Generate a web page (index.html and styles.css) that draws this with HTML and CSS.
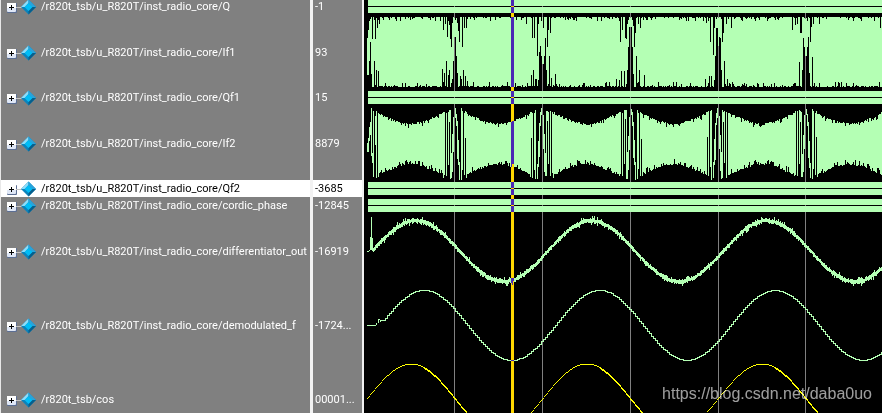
FILE: index.html
```html
<!DOCTYPE html>
<html lang="en">
<head>
<meta charset="utf-8">
<title>Wave</title>
<link rel="stylesheet" href="styles.css">
</head>
<body>
<svg class="defs" aria-hidden="true">
  <symbol id="plus" viewBox="0 0 10 10">
    <rect width="10" height="10" rx="1" fill="#5c6f94"/>
    <rect width="9" height="9" rx="1" fill="#dfe7f6"/>
    <path d="M0 0h9v5H0z" fill="#fff"/>
    <path d="M2 4h5v1H2zM4 2h1v5H4z" fill="#000"/>
  </symbol>
  <symbol id="gem" viewBox="0 0 20 16">
    <path d="M0 8h6v1H0z" fill="#c4c4c4"/>
    <path d="M12.500 0.500L20 8l-7.500 7.500L5 8z" fill="#0a84bd"/>
    <path d="M12.500 0.500L5 8h4l3.500-4z" fill="#8fdcf8"/>
    <path d="M12.500 0.500L20 8h-4l-3.500-4z" fill="#2aa3da"/>
    <path d="M20 8l-7.500 7.500V12L16 8z" fill="#075f8c"/>
    <path d="M12.500 4L16.500 8l-4 4-4-4z" fill="#00bdf6"/>
  </symbol>
</svg>
<main class="wave-window">
  <table class="signals">
    <tbody>
      <tr class="bus"><td class="name"><div class="signal"><button type="button" aria-label="Expand Q"><svg><use href="#plus"/></svg></button><svg class="gem"><use href="#gem"/></svg><span>/r820t_tsb/u_R820T/inst_radio_core/Q</span></div></td><td class="value">-1</td></tr>
      <tr class="analog"><td class="name"><div class="signal"><button type="button" aria-label="Expand If1"><svg><use href="#plus"/></svg></button><svg class="gem"><use href="#gem"/></svg><span>/r820t_tsb/u_R820T/inst_radio_core/If1</span></div></td><td class="value">93</td></tr>
      <tr class="bus"><td class="name"><div class="signal"><button type="button" aria-label="Expand Qf1"><svg><use href="#plus"/></svg></button><svg class="gem"><use href="#gem"/></svg><span>/r820t_tsb/u_R820T/inst_radio_core/Qf1</span></div></td><td class="value">15</td></tr>
      <tr class="analog"><td class="name"><div class="signal"><button type="button" aria-label="Expand If2"><svg><use href="#plus"/></svg></button><svg class="gem"><use href="#gem"/></svg><span>/r820t_tsb/u_R820T/inst_radio_core/If2</span></div></td><td class="value">8879</td></tr>
      <tr class="bus selected"><td class="name"><div class="signal"><button type="button" aria-label="Expand Qf2"><svg><use href="#plus"/></svg></button><svg class="gem"><use href="#gem"/></svg><span>/r820t_tsb/u_R820T/inst_radio_core/Qf2</span></div></td><td class="value">-3685</td></tr>
      <tr class="bus"><td class="name"><div class="signal"><button type="button" aria-label="Expand cordic_phase"><svg><use href="#plus"/></svg></button><svg class="gem"><use href="#gem"/></svg><span>/r820t_tsb/u_R820T/inst_radio_core/cordic_phase</span></div></td><td class="value">-12845</td></tr>
      <tr class="analog"><td class="name"><div class="signal"><button type="button" aria-label="Expand differentiator_out"><svg><use href="#plus"/></svg></button><svg class="gem"><use href="#gem"/></svg><span>/r820t_tsb/u_R820T/inst_radio_core/differentiator_out</span></div></td><td class="value">-16919</td></tr>
      <tr class="analog"><td class="name"><div class="signal"><button type="button" aria-label="Expand demodulated_f"><svg><use href="#plus"/></svg></button><svg class="gem"><use href="#gem"/></svg><span>/r820t_tsb/u_R820T/inst_radio_core/demodulated_f</span></div></td><td class="value">-1724...</td></tr>
      <tr class="analog"><td class="name"><div class="signal"><button type="button" aria-label="Expand cos"><svg><use href="#plus"/></svg></button><svg class="gem"><use href="#gem"/></svg><span>/r820t_tsb/cos</span></div></td><td class="value">00001...</td></tr>
    </tbody>
  </table>
  <section class="waves" aria-label="Waveforms">
    <svg class="plot" shape-rendering="crispEdges" role="img" aria-label="Signal traces">
      <g transform="translate(-364 0)">
        <path id="grid" class="grid"/>
        <path id="green" class="trace"/>
        <path id="cos" class="trace-cos"/>
        <rect class="cursor" x="511" y="0" width="3" height="100%"/>
      </g>
    </svg>
    <p class="watermark">https://blog.csdn.net/daba0uo</p>
  </section>
</main>
<script src="waves.js"></script>
</body>
</html>
```
FILE: styles.css
```css
* { box-sizing: border-box; }

body {
  margin: 0;
  background: #000;
  font: 11px/16px Roboto, "Noto Sans", sans-serif;
  color: #fff;
}

.defs { display: none; }

.wave-window {
  display: flex;
  height: 100vh;
  overflow: hidden;
}

.signals {
  flex: none;
  align-self: flex-start;
  table-layout: fixed;
  width: 364px;
  margin-top: -2px;
  border-collapse: separate;
  border-spacing: 0;
  border-left: 1px solid #e8e8e8;
  background: #808080;
}

.signals td { padding: 0; vertical-align: middle; }
.signals .bus td { height: 17px; }
.signals .analog td { height: 74px; padding-top: 2px; }

.name {
  width: 312px;
  border-right: 3px solid #f2f2f2;
}

.value {
  width: 51px;
  border-right: 2px solid #f2f2f2;
}

.signals .value { padding-left: 2px; }

.signal {
  display: flex;
  align-items: center;
  height: 16px;
  padding-left: 6px;
  white-space: nowrap;
}

.signal button {
  display: block;
  width: 10px;
  height: 10px;
  margin-top: 2px;
  margin-right: -1px;
  padding: 0;
  border: 0;
  background: none;
}

.signal button svg {
  display: block;
  width: 10px;
  height: 10px;
}

.gem {
  width: 20px;
  height: 16px;
  margin-right: 5px;
}

.selected td {
  background: #fff;
  color: #000;
}

.waves {
  position: relative;
  flex: 1;
  min-width: 0;
  overflow: hidden;
  background: #000;
}

.plot {
  display: block;
  width: 100%;
  height: 100%;
}

.grid { fill: #808080; }
.trace { fill: #b4ffb4; }
.trace-cos { fill: #ff0; }

.cursor {
  fill: #ffd700;
  mix-blend-mode: difference;
}

.watermark {
  position: absolute;
  right: 10px;
  top: 384px;
  margin: 0;
  font: 16px/20px "Liberation Sans", sans-serif;
  color: rgba(255, 255, 255, 0.62);
}
```
FILE: waves.js
```js
const LEFT = 368;
const END = 364 + Math.max(document.querySelector('.waves').clientWidth, 518);
const PERIOD = 175.5;
const HALF = 87.8;

let seed = 11;
const rand = () => {
  seed = (seed * 16807) % 2147483647;
  return seed / 2147483647;
};

const bar = (x, y1, y2, w = 1) => `M${x} ${y1}h${w}V${y2}h${-w}z`;
const wave = (x, peak) => Math.cos((2 * Math.PI * (x - peak)) / PERIOD);
const gridX = (i) => Math.floor(454.6 + i * HALF);

// Time grid
let grid = '';
for (let i = 0; gridX(i) < END; i++) grid += bar(gridX(i), 0, 2000);
document.getElementById('grid').setAttribute('d', grid);

let green = '';

// Buses: two bands with a value line between them
for (const y of [0, 91, 182, 199]) {
  green += bar(LEFT, y, y + 6, END - LEFT) + bar(LEFT, y + 7, y + 13, END - LEFT);
}

// If1: full-scale band, notched from the top and from the bottom
const topNotch = {
  367: 38, 368: 30, 369: 21, 372: 39, 375: 39, 377: 28, 379: 24,
  443: 30, 445: 24, 447: 37, 449: 25, 450: 39, 451: 47, 452: 23, 457: 23, 458: 31, 459: 42, 462: 47, 464: 28, 466: 28,
  526: 24, 532: 38, 534: 38, 537: 56, 538: 24, 541: 21, 543: 28, 547: 47, 548: 30, 550: 33,
  620: 42, 622: 30, 625: 38, 626: 39, 627: 24, 628: 20, 632: 20, 633: 26, 634: 47, 635: 33, 638: 24, 640: 28,
  703: 21, 706: 23, 708: 21, 710: 42, 713: 55, 714: 28, 722: 42, 723: 33, 726: 24, 731: 28,
  792: 30, 795: 25, 797: 24, 800: 33, 801: 33, 810: 42, 811: 27, 813: 24, 819: 24, 880: 28
};
const bottomNotch = {
  367: 75, 368: 75, 369: 61, 370: 42, 371: 74, 374: 61, 376: 70, 378: 71,
  442: 69, 444: 73, 446: 61, 448: 75, 449: 70, 451: 83, 452: 79, 453: 61, 454: 37, 455: 37, 456: 56, 457: 73, 460: 76, 461: 79, 463: 70, 465: 76, 467: 81,
  531: 75, 533: 70, 535: 79, 536: 79, 538: 80, 539: 52, 540: 46, 541: 56, 542: 64, 543: 64, 544: 56, 545: 38, 546: 70, 549: 56, 551: 78, 555: 74,
  616: 79, 619: 80, 621: 71, 624: 71, 627: 70, 628: 47, 629: 27, 630: 27, 631: 27, 632: 47, 633: 74, 636: 56, 639: 70, 644: 75,
  705: 79, 709: 76, 711: 76, 714: 80, 715: 56, 716: 28, 717: 28, 718: 46, 719: 37, 720: 38, 721: 70, 724: 61, 727: 79,
  799: 62, 802: 70, 803: 38, 804: 47, 805: 56, 806: 56, 807: 47, 808: 37, 809: 73, 812: 57
};
for (let x = 367; x < END; x++) {
  const t = topNotch[x] ?? 17 + (rand() < 0.25 ? Math.floor(rand() * 5) : Math.floor(rand() * 1.3));
  const b = bottomNotch[x] ?? 87 - (rand() < 0.3 ? Math.floor(rand() * 6) : Math.floor(rand() * 2));
  green += bar(x, t, b);
}

// If2: body between pinch points, thin excursions around each one
const start = [[367, 143, 152], [368, 138, 152], [369, 127, 141], [370, 122, 135], [371, 108, 156], [372, 153, 163], [373, 111, 177], [375, 116, 145], [376, 111, 178], [378, 113, 177]];
const excursions = [
  [-12, 113, 176], [-11, 113, 178], [-10, 112, 175], [-8, 112, 178], [-6, 111, 165], [-5, 111, 122], [-4, 111, 179],
  [-3, 153, 179], [-2, 135, 172], [-1, 116, 152], [1, 108, 118], [2, 113, 128], [3, 122, 160], [4, 140, 168], [5, 163, 180],
  [7, 109, 180], [8, 112, 170], [10, 112, 178], [11, 112, 140], [12, 113, 178]
];
const skip = new Set();
const addBars = (bars, origin) => bars.forEach(([dx, a, b]) => { green += bar(origin + dx, a, b); });
addBars(start, 0);
for (let i = 0; gridX(i) < END + 20; i++) {
  const x = gridX(i);
  for (let d = -12; d <= 12; d++) skip.add(x + d);
  const side = i % 2 ? -1 : 1;
  addBars(excursions.map(([dx, a, b]) => [dx * side, a + Math.floor(rand() * 3) - 1, b - Math.floor(rand() * 4)]), x);
}
for (let x = 379; x < END; x++) {
  if (skip.has(x)) continue;
  const e = (1 - Math.cos((2 * Math.PI * (x - 454)) / HALF)) / 2;
  const t = Math.round(111 + 12 * e + (rand() < 0.3 ? rand() * 5 : rand() * 2));
  const b = Math.round(177 - 12 * e - (rand() < 0.35 ? rand() * 6 : rand() * 2));
  green += bar(x, t, b);
}

// differentiator_out: noisy sine after a start-up spike
green += bar(367, 251, 252, 2) + bar(369, 250, 251) + bar(370, 237, 250) + bar(371, 217, 250) + bar(372, 238, 251);
for (let x = 373; x < END; x++) {
  const w = wave(x, 415.5);
  const y = 251 - 30.5 * w;
  const flat = Math.abs(w);
  const up = 1 + rand() * (flat > 0.5 ? 1.8 : 1.2) + (rand() < 0.15 * flat ? 2 : 0);
  const down = 1.4 + rand() * 1.8 + (rand() < 0.15 * flat ? 2 : 0);
  green += bar(x, Math.round(y - up), Math.round(y + down));
}

// demodulated_f: clean sine drawn in steps
green += bar(367, 325, 326, 9) + bar(376, 323, 325) + bar(378, 319, 323) + bar(379, 319, 320) + bar(380, 320, 322) + bar(381, 320, 321, 3);
for (let x = 384; x < END; x += 2) {
  const a = Math.round(325 - 35 * wave(x, 424));
  const b = Math.round(325 - 35 * wave(x + 2, 424));
  green += bar(x, a, a + 1) + bar(x + 1, Math.min(a, b), Math.max(a, b) + 1);
}
document.getElementById('green').setAttribute('d', green);

// cos: solid on the falling slope, dotted on the rising one
let cos = '';
for (let x = 367; x < END; x++) {
  const y = Math.round(398 - 34.5 * wave(x, 411));
  const falling = wave(x + 1, 411) < wave(x, 411);
  const near = wave(x, 411) > 0.9;
  cos += bar(x, y, y + (falling && !near ? 2 : 1));
}
document.getElementById('cos').setAttribute('d', cos);
```
